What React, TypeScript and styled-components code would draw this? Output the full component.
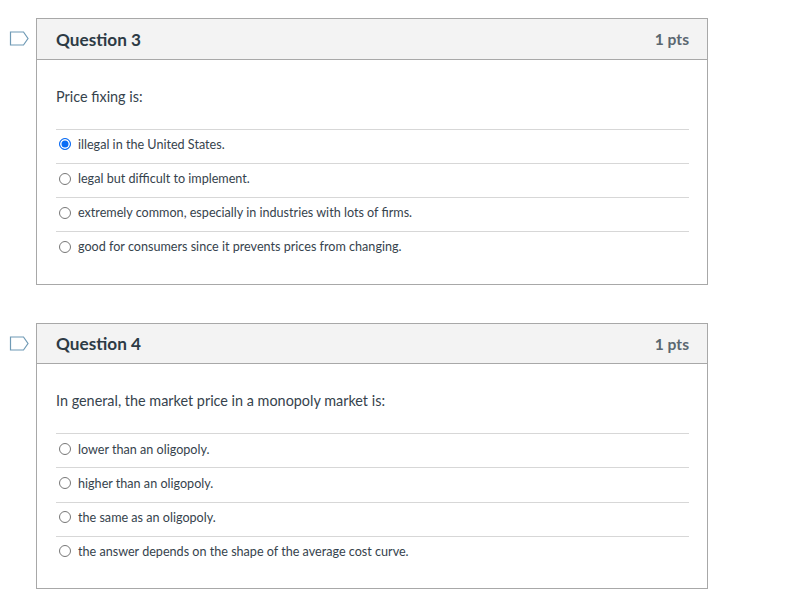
import React, { FC } from "react";
import styled, { createGlobalStyle } from "styled-components";

const GlobalStyle = createGlobalStyle`
  html, body {
    margin: 0;
    padding: 0;
    background: #fff;
    font-family: Lato, "Open Sans", sans-serif;
    color: #2d3b45;
  }
`;

const Page = styled.div`
  width: 672px;
  padding: 18px 0 0 36px;
  display: flex;
  flex-direction: column;
  gap: 38.1px;
`;

const Card = styled.section`
  position: relative;
  border: 1px solid #a8a8a8;
  box-sizing: border-box;
  width: 672px;
`;

const Header = styled.header`
  display: flex;
  align-items: center;
  justify-content: space-between;
  height: 39.6px;
  padding: 0 18px 0 19px;
  background: #f3f3f3;
  border-bottom: 1px solid #a8a8a8;
`;

const Title = styled.h2`
  margin: 0;
  padding-top: 1px;
  font-size: 17.2px;
  font-weight: 700;
  color: #2d3b45;
`;

const Points = styled.span`
  padding-top: 1px;
  font-size: 15.6px;
  font-weight: 700;
  color: #5b6770;
`;

const Flag = styled.svg`
  position: absolute;
  left: -28px;
  top: 12px;
  width: 20px;
  height: 16px;
`;

const Body = styled.div`
  padding: 27px 18px 18.4px 19px;
`;

const Prompt = styled.p`
  margin: 0 0 22px;
  font-size: 14.4px;
  line-height: 20px;
  color: #36434d;
`;

const Answers = styled.ul`
  list-style: none;
  margin: 0;
  padding: 0;
`;

const Answer = styled.li`
  display: flex;
  align-items: center;
  height: 34.15px;
  box-sizing: border-box;
  border-top: 1px solid #d7d7d7;
  padding: 0 0 3.6px 3px;
  gap: 7px;
  font-size: 12.6px;
  color: #36434d;
`;

const Radio = styled.span<{ $checked?: boolean }>`
  width: 12px;
  height: 12px;
  border-radius: 50%;
  box-sizing: border-box;
  flex: none;
  background: ${({ $checked }) => ($checked ? "#0a6cf5" : "#fff")};
  border: 1px solid ${({ $checked }) => ($checked ? "#0a6cf5" : "#777")};
  box-shadow: ${({ $checked }) => ($checked ? "inset 0 0 0 1.5px #fff" : "none")};
`;

interface QuestionProps {
  title: string;
  prompt: string;
  answers: string[];
  selected?: number;
}

const Question: FC<QuestionProps> = ({ title, prompt, answers, selected }) => (
  <Card>
    <Flag viewBox="0 0 20 16" fill="none" aria-hidden="true">
      <path d="M1.5 1H14.5L19 7.5L14.5 14H1.5Z" stroke="#6f9ab5" strokeWidth="1.2" />
    </Flag>
    <Header>
      <Title>{title}</Title>
      <Points>1 pts</Points>
    </Header>
    <Body>
      <Prompt>{prompt}</Prompt>
      <Answers>
        {answers.map((answer, i) => (
          <Answer key={answer}>
            <Radio $checked={i === selected} />
            {answer}
          </Answer>
        ))}
      </Answers>
    </Body>
  </Card>
);

const App: FC = () => (
  <Page>
    <GlobalStyle />
    <Question
      title="Question 3"
      prompt="Price fixing is:"
      selected={0}
      answers={[
        "illegal in the United States.",
        "legal but difficult to implement.",
        "extremely common, especially in industries with lots of firms.",
        "good for consumers since it prevents prices from changing.",
      ]}
    />
    <Question
      title="Question 4"
      prompt="In general, the market price in a monopoly market is:"
      answers={[
        "lower than an oligopoly.",
        "higher than an oligopoly.",
        "the same as an oligopoly.",
        "the answer depends on the shape of the average cost curve.",
      ]}
    />
  </Page>
);

export default App;
